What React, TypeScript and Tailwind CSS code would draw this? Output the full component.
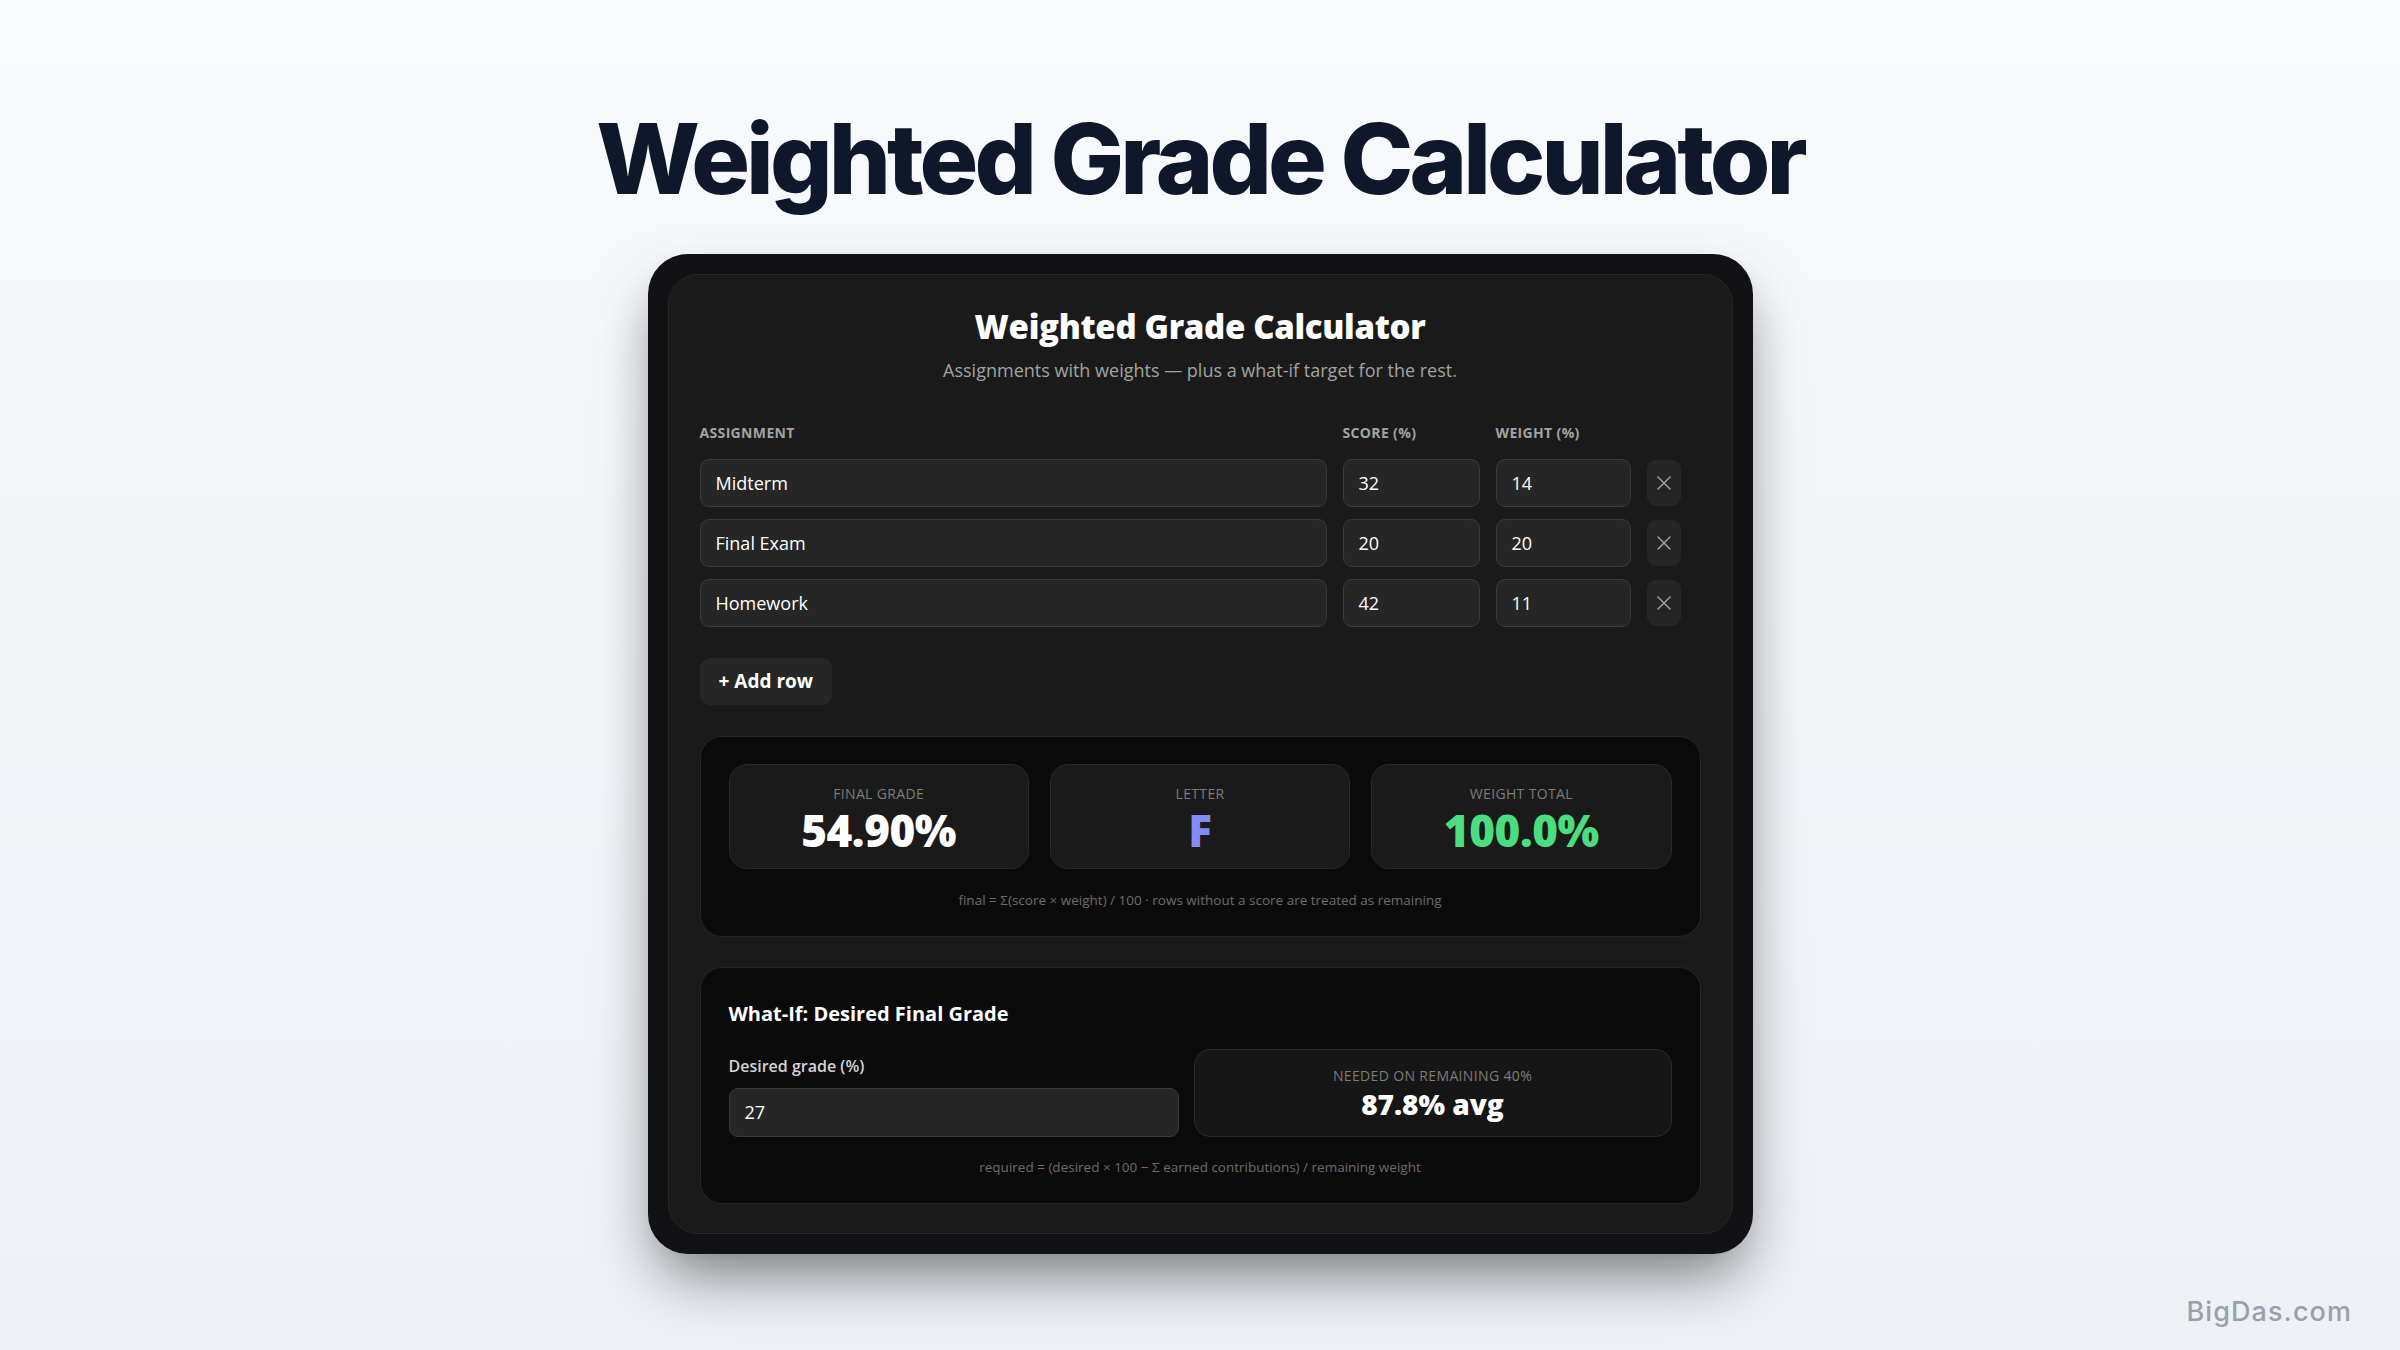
import React from "react";
import { X } from "lucide-react";

const rows = [
  { name: "Midterm", score: "32", weight: "14" },
  { name: "Final Exam", score: "20", weight: "20" },
  { name: "Homework", score: "42", weight: "11" },
];

export default function App() {
  return (
    <div className="relative flex min-h-[1350px] w-full flex-col items-center bg-linear-to-b from-[#f8fafc] to-[#edf1f6] font-['Open_Sans',sans-serif]">
      <h1 className="mt-[110px] font-['Inter',sans-serif] text-[98px] font-extrabold leading-none tracking-[-0.04em] text-[#0f172a]">
        Weighted Grade Calculator
      </h1>

      <div className="mt-[46px] w-[1105px] rounded-[40px] bg-[#121214] p-5 shadow-[0_30px_60px_-10px_rgba(0,0,0,0.5)]">
        <div className="rounded-[30px] border border-[#262626] bg-[#1a1a1a] px-[31px] pb-[29px] pt-[31px]">
          <h2 className="text-center text-[33px] font-extrabold leading-[42px] tracking-[-0.01em] text-white">
            Weighted Grade Calculator
          </h2>
          <p className="mt-[9px] text-center text-[18px] leading-[26px] text-[#a3a3a3]">
            Assignments with weights — plus a what-if target for the rest.
          </p>

          <div className="mt-[41px] grid grid-cols-[627px_137px_135px_34px] gap-x-4">
            <div className="text-[14px] font-bold leading-[18px] tracking-wide text-[#a3a3a3]">ASSIGNMENT</div>
            <div className="text-[14px] font-bold leading-[18px] tracking-wide text-[#a3a3a3]">SCORE (%)</div>
            <div className="text-[14px] font-bold leading-[18px] tracking-wide text-[#a3a3a3]">WEIGHT (%)</div>
            <div />
          </div>

          <div className="mt-[17px] flex flex-col gap-3">
            {rows.map((r) => (
              <div key={r.name} className="grid grid-cols-[627px_137px_135px_34px] items-center gap-x-4">
                <div className="flex h-[48px] items-center rounded-[9px] border border-[#3a3a3a] bg-[#262626] px-[15px] text-[18px] text-white">
                  {r.name}
                </div>
                <div className="flex h-[48px] items-center rounded-[9px] border border-[#3a3a3a] bg-[#262626] px-[15px] text-[18px] text-white">
                  {r.score}
                </div>
                <div className="flex h-[48px] items-center rounded-[9px] border border-[#3a3a3a] bg-[#262626] px-[15px] text-[18px] text-white">
                  {r.weight}
                </div>
                <div className="flex h-[46px] items-center justify-center rounded-[9px] bg-[#252525] text-[#a3a3a3]">
                  <X size={24} strokeWidth={1.4} />
                </div>
              </div>
            ))}
          </div>

          <button className="mt-[31px] flex h-[47px] items-center rounded-[10px] bg-[#262626] px-[19px] text-[19px] font-bold text-white">
            + Add row
          </button>

          <div className="mt-[31px] rounded-[22px] border border-[#262626] bg-[#0b0b0b] px-[28px] pb-[27px] pt-[27px]">
            <div className="grid grid-cols-3 gap-[21px]">
              <div className="flex h-[105px] flex-col items-center rounded-[18px] border border-[#2a2a2a] bg-[#1a1a1a] pt-[20px]">
                <div className="text-[14px] leading-[17px] tracking-wide text-[#7c7c7c]">FINAL GRADE</div>
                <div className="mt-[3px] text-[44px] font-extrabold leading-[50px] tracking-[-0.01em] text-white">54.90%</div>
              </div>
              <div className="flex h-[105px] flex-col items-center rounded-[18px] border border-[#2a2a2a] bg-[#1a1a1a] pt-[20px]">
                <div className="text-[14px] leading-[17px] tracking-wide text-[#7c7c7c]">LETTER</div>
                <div className="mt-[3px] text-[44px] font-extrabold leading-[50px] text-[#818cf8]">F</div>
              </div>
              <div className="flex h-[105px] flex-col items-center rounded-[18px] border border-[#2a2a2a] bg-[#1a1a1a] pt-[20px]">
                <div className="text-[14px] leading-[17px] tracking-wide text-[#7c7c7c]">WEIGHT TOTAL</div>
                <div className="mt-[3px] text-[44px] font-extrabold leading-[50px] tracking-[-0.01em] text-[#4ade80]">100.0%</div>
              </div>
            </div>
            <p className="mt-[22px] text-center text-[13.5px] leading-[18px] text-[#6b6b6b]">
              final = Σ(score × weight) / 100 · rows without a score are treated as remaining
            </p>
          </div>

          <div className="mt-[30px] rounded-[22px] border border-[#262626] bg-[#0b0b0b] px-[28px] pb-[27px] pt-[32px]">
            <h3 className="text-[20px] font-bold leading-[28px] text-white">What-If: Desired Final Grade</h3>
            <div className="mt-[21px] flex items-end gap-[15px]">
              <div className="w-[450px]">
                <div className="text-[16px] font-semibold leading-[20px] text-[#d4d4d4]">Desired grade (%)</div>
                <div className="mt-[12px] flex h-[49px] items-center rounded-[9px] border border-[#3a3a3a] bg-[#262626] px-[15px] text-[18px] text-white">
                  27
                </div>
              </div>
              <div className="flex h-[88px] flex-1 flex-col items-center rounded-[16px] border border-[#2a2a2a] bg-[#161616] pt-[17px]">
                <div className="text-[14px] leading-[17px] tracking-wide text-[#7c7c7c]">NEEDED ON REMAINING 40%</div>
                <div className="mt-[3px] text-[28px] font-extrabold leading-[34px] text-white">87.8% avg</div>
              </div>
            </div>
            <p className="mt-[21px] text-center text-[13.5px] leading-[18px] text-[#6b6b6b]">
              required = (desired × 100 − Σ earned contributions) / remaining weight
            </p>
          </div>
        </div>
      </div>

      <div className="absolute bottom-[18px] right-[48px] font-['Inter',sans-serif] text-[27px] font-medium tracking-[0.04em] text-[#9aa0ab]">
        BigDas.com
      </div>
    </div>
  );
}
